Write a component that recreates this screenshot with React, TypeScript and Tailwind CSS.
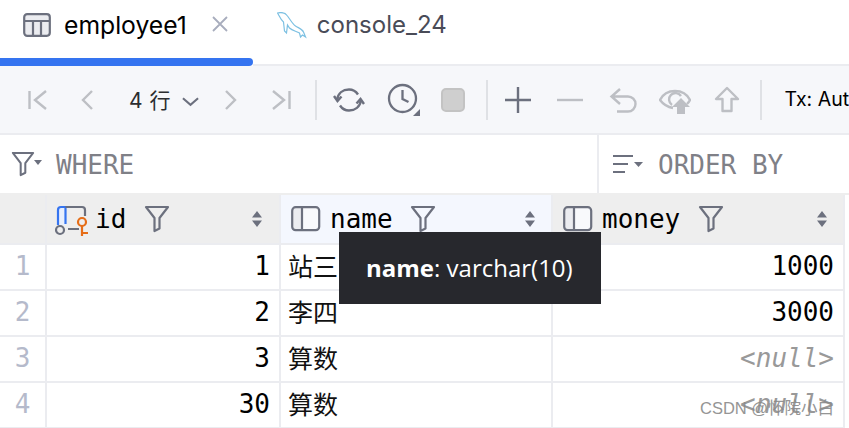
import React from 'react';

const mono = { fontFamily: '"DejaVu Sans Mono", monospace' };
const ui = { fontFamily: 'Inter, sans-serif' };
const cjk = { fontFamily: '"Noto Sans CJK SC", sans-serif' };

// toolbar icon, 32px box
function Ico({ ml, color = '#bdbfc4', children }: { ml: string; color?: string; children: React.ReactNode }) {
  return (
    <svg viewBox="0 0 32 32" fill="none" stroke={color} strokeWidth="2.4" className={`w-8 h-8 shrink-0 ${ml}`}>
      {children}
    </svg>
  );
}

function FilterIcon({ className }: { className: string }) {
  return (
    <svg viewBox="0 0 26 28" fill="none" stroke="#6c707e" strokeWidth="2.2" className={className}>
      <path d="M2 2h22l-8.500 11v10.500L10.500 26V13z" strokeLinejoin="round" />
    </svg>
  );
}

function ColumnIcon() {
  return (
    <svg viewBox="0 0 30 26" fill="none" className="w-[30px] h-[26px] shrink-0">
      <rect x="1.2" y="1.2" width="27" height="23" rx="3.500" fill="#ebecf0" />
      <path d="M11 1.2h14.500a3 3 0 0 1 3 3v17a3 3 0 0 1-3 3H11z" fill="#f8f9fc" />
      <rect x="1.2" y="1.2" width="27" height="23" rx="3.500" stroke="#6c707e" strokeWidth="2.2" />
      <path d="M11 1.2v23" stroke="#6c707e" strokeWidth="2.2" />
    </svg>
  );
}

function SortIcon() {
  return (
    <svg viewBox="0 0 12 18" fill="#6c707e" className="w-3 h-[18px] shrink-0">
      <path d="M6 1l5 6.500H1zM6 17l-5-6.500h10z" />
    </svg>
  );
}

function HeaderCell({ name, bg, icon, nameW, sortGap }: { name: string; bg: string; icon: React.ReactNode; nameW: string; sortGap: string }) {
  return (
    <div className={`flex items-center h-[48px] ${bg}`}>
      {icon}
      <span className={`text-[26px] leading-none text-black ${nameW}`} style={mono}>{name}</span>
      <FilterIcon className="w-[26px] h-7 shrink-0" />
      <div className={sortGap} />
      <SortIcon />
    </div>
  );
}

function Num({ children }: { children: React.ReactNode }) {
  return (
    <div className="flex items-center justify-end h-11 pr-[9px] pb-0.5 bg-white text-[26px] text-black" style={mono}>
      {children}
    </div>
  );
}

function Null() {
  return (
    <div className="flex items-center justify-end h-11 pr-[9px] pb-0.5 bg-white text-[26px] italic text-[#999999]" style={mono}>
      {'<null>'}
    </div>
  );
}

function Gutter({ n }: { n: number }) {
  return (
    <div className="flex items-center justify-center h-11 pb-0.5 bg-white text-[26px] text-[#b5bacb]" style={mono}>
      {n}
    </div>
  );
}

function Txt({ children }: { children?: React.ReactNode }) {
  return (
    <div className="flex items-center h-11 pl-[7px] pb-0.5 bg-white text-[25px] text-[#111111]" style={cjk}>
      {children}
    </div>
  );
}

export default function App() {
  return (
    <div className="relative w-[849px] h-[428px] overflow-hidden bg-white" style={ui}>
      {/* Tabs */}
      <div className="flex items-center h-[58px]">
        <svg viewBox="0 0 28 24" fill="none" stroke="#6c707e" strokeWidth="2.2" className="w-7 h-6 ml-[23px] shrink-0 mb-2">
          <rect x="1.2" y="1.2" width="25.6" height="21.6" rx="3" fill="#ebecf0" />
          <path d="M1.2 8h25.6M10 8v15M18 8v15" />
        </svg>
        <span className="ml-[13px] text-[24.7px] leading-none text-black pb-2">employee1</span>
        <svg viewBox="0 0 16 16" stroke="#a8adbd" strokeWidth="1.8" className="w-4 h-4 ml-[25px] mb-2.5 shrink-0">
          <path d="M1 1l14 14M15 1L1 15" />
        </svg>
        <svg viewBox="0 0 30 28" fill="none" stroke="#7cc0e2" strokeWidth="1.2" className="w-[30px] h-7 ml-[49px] mb-1.5 shrink-0">
          <path d="M0.500 1c4-1 8 0 10 3 3 4 5 8 8 10 3 2 7 3 8 6l2 5-3-2-2 2-1-4c-3-2-7-2-10-5l-2-3-1 8-2-2-1-9C3 7 2 3 0.500 1z" />
        </svg>
        <span className="ml-[10px] text-[24px] leading-none text-[#494b57] pb-2">console_24</span>
      </div>
      {/* Active tab underline */}
      <div className="relative h-[8px]">
        <div className="h-[8px] w-[253px] rounded-r-[4px] bg-[#3574f0]" />
        <div className="absolute left-[253px] right-0 bottom-0 h-[2px] bg-[#ebecf0]" />
      </div>
      {/* Toolbar */}
      <div className="flex items-center h-[67px] bg-[#f6f7fa] border-b-2 border-[#ebecf0] box-content">
        <Ico ml="ml-[21px]"><path d="M8.500 7v18M25 7l-11 9 11 9" /></Ico>
        <Ico ml="ml-[19px]"><path d="M20 7l-9 9 9 9" /></Ico>
        <span className="ml-[25px] text-[21px] text-[#2b2d30] flex items-baseline gap-[7px] leading-none">
          4 <span style={cjk}>行</span>
        </span>
        <svg viewBox="0 0 18 10" fill="none" stroke="#6c707e" strokeWidth="2.2" className="w-[17px] h-[10px] ml-[11px] mt-1 shrink-0">
          <path d="M1 1l8 7 8-7" />
        </svg>
        <Ico ml="ml-[16px]"><path d="M11 7l9 9-9 9" /></Ico>
        <Ico ml="ml-[19px]"><path d="M23.500 7v18M7 7l11 9-11 9" /></Ico>
        <div className="w-[2px] h-10 bg-[#dfe1e5] ml-[17px] shrink-0" />
        <Ico ml="ml-[16px]" color="#6c707e">
          <path d="M4 16C5 9 10 5.500 16 5.500c4 0 7 2 9 5M28 16c-1 7-6 10.500-12 10.500-4 0-7-2-9-5" />
          <path d="M1 12l3.500 5 4-4.500M31 20l-3.500-5-4 4.500" />
        </Ico>
        <svg viewBox="0 0 34 34" fill="none" stroke="#6c707e" strokeWidth="2.3" className="w-[34px] h-[34px] ml-[22px] shrink-0">
          <circle cx="15.500" cy="15.500" r="13.500" />
          <path d="M15.500 7v9l6 3" />
          <path d="M33 26v7h-7z" fill="#6c707e" stroke="none" />
        </svg>
        <div className="w-6 h-6 ml-[20px] rounded-[5px] bg-[#cfcfcf] border-2 border-[#c3c3c3] shrink-0" />
        <div className="w-[2px] h-10 bg-[#dfe1e5] ml-[21px] shrink-0" />
        <Ico ml="ml-[14px]" color="#6c707e"><path d="M3 16h26M16 3v26" /></Ico>
        <Ico ml="ml-[20px]"><path d="M3 16h26" /></Ico>
        <Ico ml="ml-[20px]"><path d="M14 5L5.500 12.500 14 20M5.500 12.500H22a7.500 7.500 0 0 1 0 15h-11" /></Ico>
        <Ico ml="ml-[21px]">
          <path d="M14 24C8 23 4 20 1 16c3-6 8-9 15-9s12 3 15 9c-1 2-2 3-3 4" />
          <path d="M13 21a6.500 6.500 0 1 1 9-9" />
          <path d="M22 14l9 9h-5v7h-8v-7h-5z" fill="#bdbfc4" stroke="none" />
        </Ico>
        <Ico ml="ml-[20px]"><path d="M16 4L5 15h6.500v12h9V15H27z" strokeLinejoin="round" /></Ico>
        <div className="w-[2px] h-10 bg-[#dfe1e5] ml-[17px] shrink-0" />
        <span className="ml-[23px] text-[19.5px] text-black whitespace-nowrap">Tx: Auto</span>
      </div>
      {/* WHERE / ORDER BY */}
      <div className="flex h-[58px]">
        <div className="flex items-center w-[597px] pl-[11px]">
          <FilterIcon className="w-[24px] h-[26px] shrink-0" />
          <svg viewBox="0 0 8 5" fill="#6c707e" className="w-2 h-[5px] -ml-[1px] mb-1 shrink-0"><path d="M0 0h8L4 5z" /></svg>
          <span className="ml-[14px] mt-0.5 text-[26px] text-[#7f8087] leading-none" style={mono}>WHERE</span>
        </div>
        <div className="w-[2px] bg-[#ebecf0] shrink-0" />
        <div className="flex items-center pl-[14px]">
          <svg viewBox="0 0 30 20" fill="none" stroke="#6c707e" strokeWidth="2.2" className="w-[30px] h-5 shrink-0">
            <path d="M0 2h20M0 10h15M0 18h12" />
            <path d="M21 8h9l-4.500 5z" fill="#6c707e" stroke="none" />
          </svg>
          <span className="ml-[15px] mt-0.5 text-[26px] text-[#7f8087] leading-none" style={mono}>ORDER BY</span>
        </div>
      </div>
      {/* Table */}
      <div className="border-t-2 border-[#eeeeee]">
        <div className="grid grid-cols-[45px_232px_270px_290px] gap-[2px] w-[845px] pr-[2px] pb-[2px] bg-[#ebecf0]">
          <div className="h-[48px] bg-[#eeeeee]" />
          <HeaderCell
            name="id"
            bg="bg-[#eeeeee] pl-[8px]"
            nameW="w-[49px] ml-[6px]"
            sortGap="w-[81px]"
            icon={
              <svg viewBox="0 0 34 34" fill="none" className="w-[34px] h-[34px] shrink-0">
                <path d="M3 23V8a3 3 0 0 1 3-3h4.500v18z" fill="#e8effd" />
                <path d="M3 23V8a3 3 0 0 1 3-3h4.500v17" stroke="#3574f0" strokeWidth="2.2" />
                <path d="M10.500 5H27a3 3 0 0 1 3 3v6M13 27h11" stroke="#6c707e" strokeWidth="2.2" />
                <circle cx="5" cy="28" r="4" fill="#eeeeee" stroke="#6c707e" strokeWidth="2.2" />
                <circle cx="27" cy="20" r="4" fill="#eeeeee" stroke="#e66d17" strokeWidth="2.2" />
                <path d="M27 24v10M27 31h6" stroke="#e66d17" strokeWidth="2.2" />
              </svg>
            }
          />
          <HeaderCell
            name="name"
            bg="bg-[#f4f7fe] pl-[10px]"
            nameW="w-[80px] ml-[9px]"
            sortGap="w-[88px]"
            icon={<ColumnIcon />}
          />
          <HeaderCell
            name="money"
            bg="bg-[#eeeeee] pl-[10px]"
            nameW="w-[96px] ml-[9px]"
            sortGap="w-[92px]"
            icon={<ColumnIcon />}
          />
          <Gutter n={1} /><Num>1</Num><Txt>站三</Txt><Num>1000</Num>
          <Gutter n={2} /><Num>2</Num><Txt>李四</Txt><Num>3000</Num>
          <Gutter n={3} /><Num>3</Num><Txt>算数</Txt><Null />
          <Gutter n={4} /><Num>30</Num><Txt>算数</Txt><Null />
        </div>
      </div>
      {/* Column tooltip */}
      <div
        className="absolute left-[339px] top-[232px] flex items-center w-[262px] h-[72px] pl-[27px] bg-[#27282d] text-[24px] text-white"
        style={{ fontFamily: '"Open Sans", sans-serif' }}
      >
        <span className="font-bold">name</span>: varchar(10)
      </div>
      {/* Watermark */}
      <div
        className="absolute left-[700px] top-[398px] text-[16.5px] leading-5 text-[#8a8a8a] opacity-90 whitespace-nowrap"
        style={{ fontFamily: '"Liberation Sans", "Noto Sans CJK SC", sans-serif' }}
      >
        CSDN @怀院小白
      </div>
    </div>
  );
}
